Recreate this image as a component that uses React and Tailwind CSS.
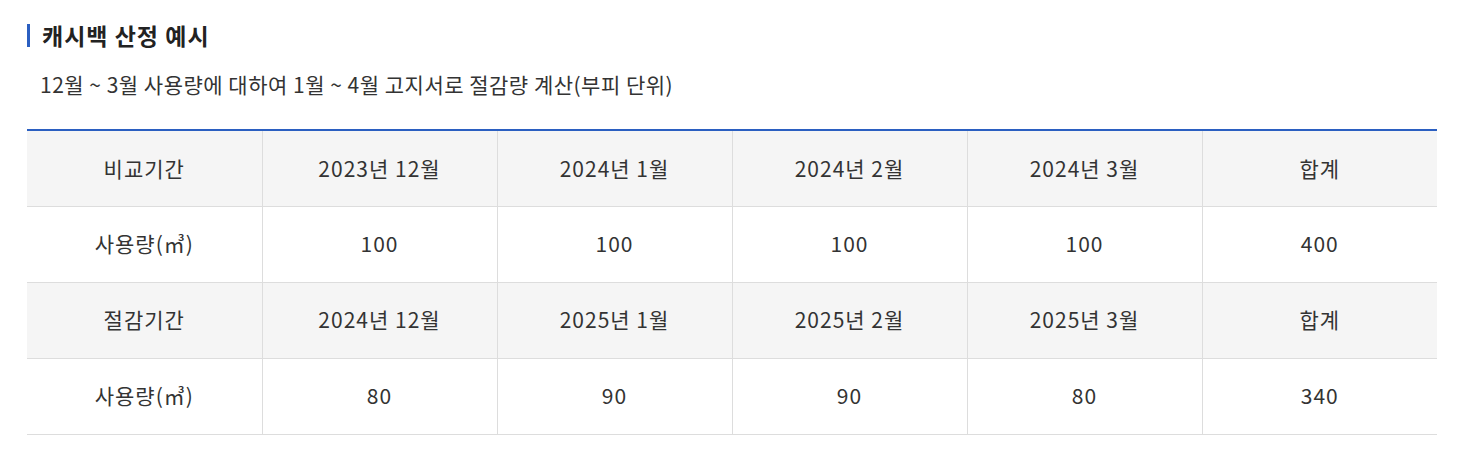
import React from "react";

const rows = [
  { head: true, cells: ["비교기간", "2023년 12월", "2024년 1월", "2024년 2월", "2024년 3월", "합계"] },
  { head: false, cells: ["사용량(㎥)", "100", "100", "100", "100", "400"] },
  { head: true, cells: ["절감기간", "2024년 12월", "2025년 1월", "2025년 2월", "2025년 3월", "합계"] },
  { head: false, cells: ["사용량(㎥)", "80", "90", "90", "80", "340"] },
];

export default function App() {
  return (
    <div
      className="w-[1475px] h-[456px] bg-white text-[#333]"
      style={{ fontFamily: '"Noto Sans CJK KR", "Noto Sans", sans-serif' }}
    >
      <div className="pl-[27px] pt-[24px]">
        <div className="flex items-center h-[23px]">
          <div className="w-[3px] h-[23px] bg-[#2b5fc1]" />
          <h2 className="ml-[12px] text-[23px] font-bold text-[#222] leading-none tracking-[1px]">
            캐시백 산정 예시
          </h2>
        </div>
        <p className="mt-[24px] ml-[13px] text-[21px] leading-[26px] text-[#333] tracking-[0.5px]">
          12월 ~ 3월 사용량에 대하여 1월 ~ 4월 고지서로 절감량 계산(부피 단위)
        </p>
        <table className="mt-[32px] w-[1410px] border-collapse table-fixed border-t-2 border-t-[#2b5fc1]">
          <tbody>
            {rows.map((r, i) => (
              <tr key={i} className={r.head ? "bg-[#f5f5f5]" : "bg-white"}>
                {r.cells.map((c, j) => (
                  <td
                    key={j}
                    className={
                      "h-[76px] p-0 text-center align-middle text-[21px] text-[#333] border-b border-[#dddddd] tracking-[1px] " +
                      (j < 5 ? "border-r" : "")
                    }
                  >
                    {c}
                  </td>
                ))}
              </tr>
            ))}
          </tbody>
        </table>
      </div>
    </div>
  );
}
